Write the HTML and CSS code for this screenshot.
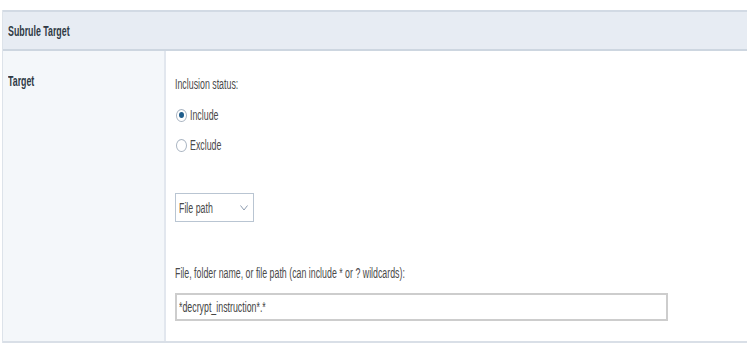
FILE: index.html
```html
<!DOCTYPE html>
<html lang="en">
<head>
    <meta charset="UTF-8">
    <title>Subrule Target</title>
    <link rel="stylesheet" href="styles.css">
</head>
<body>
    <div class="panel">
        <div class="panel__head">
            <span class="txt txt--bold">Subrule Target</span>
        </div>
        <div class="panel__row">
            <div class="panel__label">
                <span class="txt txt--bold">Target</span>
            </div>
            <div class="panel__body">
                <div class="field-label"><span class="txt">Inclusion status:</span></div>
                <label class="radio radio--first">
                    <span class="radio__mark radio__mark--on"></span>
                    <span class="txt">Include</span>
                </label>
                <label class="radio">
                    <span class="radio__mark"></span>
                    <span class="txt">Exclude</span>
                </label>
                <div class="select">
                    <span class="txt">File path</span>
                    <svg class="select__arrow" width="8" height="6" viewBox="0 0 8 6">
                        <path d="M0.5 0.5 L4 5 L7.5 0.5" fill="none" stroke="#8e9db0" stroke-width="1"/>
                    </svg>
                </div>
                <div class="field-label field-label--path"><span class="txt">File, folder name, or file path (can include * or ? wildcards):</span></div>
                <div class="input">
                    <span class="txt txt--value">*decrypt_instruction*.*</span>
                </div>
            </div>
        </div>
    </div>
</body>
</html>
```

FILE: styles.css
```css
body {
    margin: 0;
    background: #fff;
    font-family: "Liberation Sans", Arial, sans-serif;
    font-size: 14px;
    color: #4a4a4a;
}
.panel {
    margin: 10px 0 0 2px;
    border-left: 1px solid #dde3ea;
}
.panel__head {
    height: 37px;
    display: flex;
    align-items: center;
    padding-left: 5px;
    background: #e7ecf3;
    border-top: 2px solid #d2dae4;
    border-bottom: 2px solid #cdd6e0;
}
.txt {
    display: inline-block;
    white-space: nowrap;
    line-height: 16px;
    transform: scaleX(0.63);
    transform-origin: 0 50%;
}
.txt--bold {
    font-weight: bold;
    color: #2f3a45;
}
.txt--value {
    color: #444;
}
.panel__row {
    display: flex;
    height: 290px;
    border-bottom: 2px solid #d9dfe7;
}
.panel__label {
    width: 156px;
    flex-shrink: 0;
    padding: 22px 0 0 5px;
    background: #f4f7fa;
    border-right: 2px solid #e2e7ee;
}
.panel__body {
    padding: 25px 0 0 9px;
    display: flex;
    flex-direction: column;
    align-items: flex-start;
}
.field-label {
    height: 16px;
}
.field-label--path {
    margin-top: 43px;
}
.radio {
    display: flex;
    align-items: center;
    gap: 3px;
    height: 16px;
    margin-top: 14px;
    padding-left: 1px;
}
.radio--first {
    margin-top: 15px;
}
.radio__mark {
    width: 9px;
    height: 11px;
    border: 1px solid #aab5c2;
    border-radius: 50%;
    display: flex;
    align-items: center;
    justify-content: center;
    background: #fff;
}
.radio__mark--on::after {
    content: "";
    width: 5px;
    height: 6px;
    border-radius: 50%;
    background: #1f5d8c;
}
.select {
    margin-top: 40px;
    width: 74px;
    height: 27px;
    border: 1px solid #b9c5d2;
    display: flex;
    align-items: center;
    padding-left: 3px;
    box-sizing: content-box;
}
.select .txt {
    width: 58px;
}
.select__arrow {
    margin-left: auto;
    margin-right: 5px;
}
.input {
    margin-top: 12px;
    width: 487px;
    height: 24px;
    border: 2px solid #cdcdcd;
    padding-left: 2px;
    display: flex;
    align-items: center;
}
```
